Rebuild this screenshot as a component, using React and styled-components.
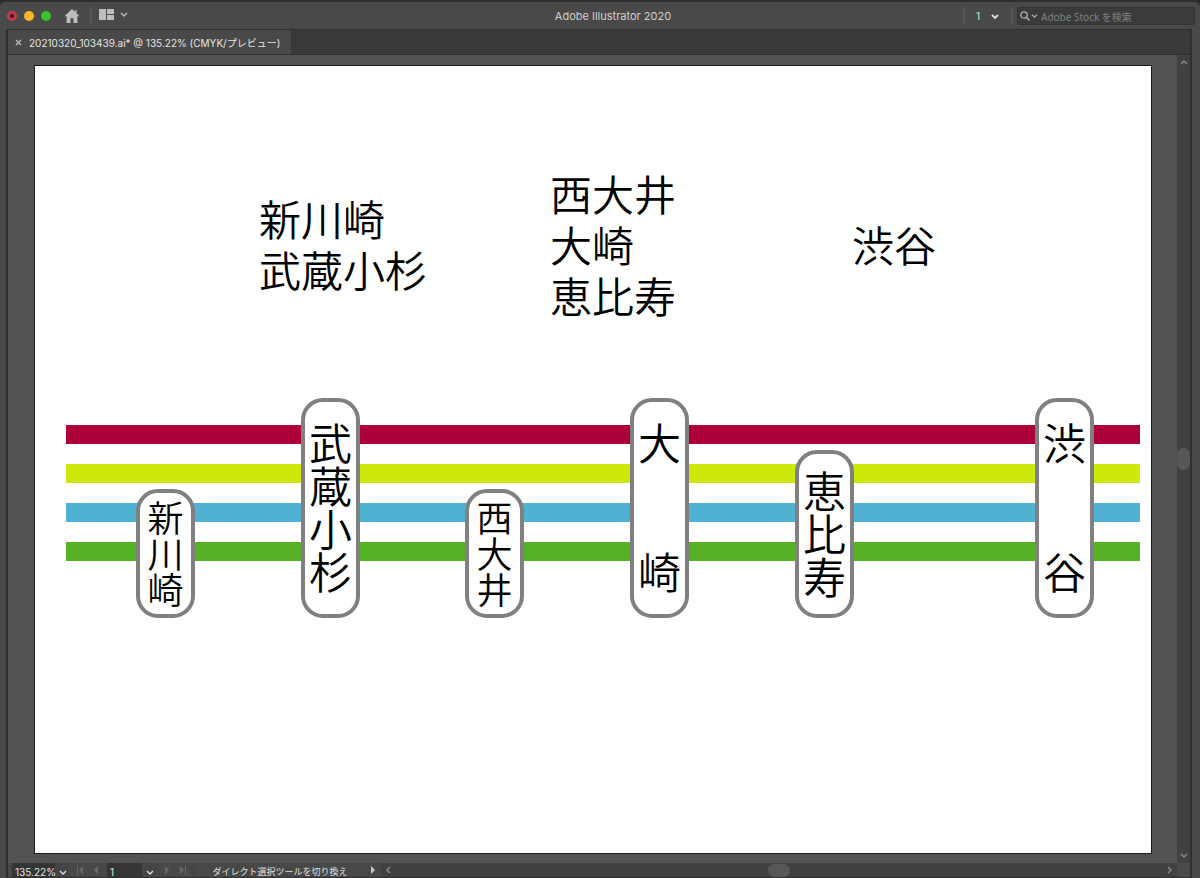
import React from "react";
import styled, { createGlobalStyle } from "styled-components";

const GlobalStyle = createGlobalStyle`
  *, *::before, *::after { box-sizing: border-box; }
  body {
    margin: 0;
    background: #2b2b2b;
    font-family: Inter, "Noto Sans CJK JP", sans-serif;
    font-size: 10px;
    color: #dcdcdc;
  }
  button, input, select { font: inherit; color: inherit; margin: 0; padding: 0; border: 0; background: none; }
`;

const Window = styled.div`
  display: flex;
  flex-direction: column;
  min-height: 100vh;
  background: #494949;
  border-top: 2px solid #303030;
  border-radius: 6px 6px 0 0;
  overflow: hidden;
`;

const TitleBar = styled.header`
  display: grid;
  grid-template-columns: 1fr auto 1fr;
  align-items: center;
  height: 27px;
  padding: 0 5px 0 7px;
`;

const TitleGroup = styled.div`
  display: flex;
  align-items: center;
  justify-content: ${(p) => (p.$end ? "flex-end" : "flex-start")};
`;

const Lights = styled.div`
  display: flex;
  gap: 7px;
`;

const Light = styled.button`
  width: 10px;
  height: 10px;
  border-radius: 50%;
  background: ${(p) => p.$color};
`;

const IconButton = styled.button`
  display: flex;
  align-items: center;
  color: #bdbdbd;
`;

const HomeButton = styled(IconButton)`
  margin: 0 10px 0 13px;
`;

const LayoutButton = styled(IconButton)`
  gap: 6px;
  margin-left: 7px;
  padding-bottom: 3px;
`;

const Divider = styled.span`
  width: 2px;
  height: 18px;
  background: #555;
`;

const Title = styled.h1`
  margin: 0 0 0 24px;
  font-size: 11px;
  font-weight: 400;
  line-height: 16px;
  color: #d0d0d0;
`;

const WorkspaceField = styled.label`
  display: flex;
  align-items: center;
  width: 46px;
  padding: 0 12px 0 11px;
`;

const PlainSelect = styled.select`
  appearance: none;
  flex: 1;
  min-width: 0;
  line-height: 14px;
  outline: none;
`;

const SearchField = styled.label`
  display: flex;
  align-items: center;
  gap: 1px;
  width: 178px;
  height: 18px;
  margin-left: 4px;
  padding-left: 2px;
  background: #3b3b3b;
  border: 1px solid #343434;
  border-radius: 2px;
  color: #b0b0b0;
`;

const SearchInput = styled.input`
  flex: 1;
  min-width: 0;
  padding: 2px 0 0 2px;
  font-family: "Noto Sans", "Noto Sans CJK JP", sans-serif;
  font-size: 10px;
  line-height: 14px;
  outline: none;
  &::placeholder { color: #808080; opacity: 1; }
`;

const Frame = styled.div`
  display: flex;
  flex-direction: column;
  flex: 1;
  margin: 0 8px 0 6px;
  border: solid #303030;
  border-width: 1px 2px;
`;

const TabBar = styled.div`
  display: flex;
  height: 25px;
  background: #393939;
  border-bottom: 1px solid #303030;
`;

const Tab = styled.div`
  display: flex;
  align-items: center;
  gap: 7px;
  padding: 0 11px 0 7px;
  background: #494949;
  color: #e4e4e4;
  white-space: nowrap;
`;

const Workspace = styled.main`
  display: flex;
  flex: 1;
  background: #535353;
`;

const Artboard = styled.section`
  position: relative;
  flex: 1;
  min-height: 620px;
  margin: 10px 25px 9px 26px;
  background: #fff;
  border: 1px solid #1c1c1c;
  color: #000;
  font-family: "Noto Sans CJK JP", sans-serif;
  font-weight: 350;
`;

const TextObject = styled.p`
  position: absolute;
  left: calc(100% * ${(p) => p.$x} / 1116);
  top: ${(p) => p.$y}px;
  margin: 0;
  font-size: 42px;
  line-height: 51px;
  white-space: pre-line;
`;

const Lines = styled.div`
  display: flex;
  flex-direction: column;
  gap: 20px;
  margin: 359px 11px 0 31px;
`;

const Line = styled.div`
  height: 19px;
  background: ${(p) => p.$color};
`;

const Station = styled.div`
  position: absolute;
  left: calc(100% * ${(p) => p.$x} / 1116);
  top: ${(p) => 552 - p.$height}px;
  display: flex;
  align-items: center;
  justify-content: center;
  width: 59px;
  height: ${(p) => p.$height}px;
  background: #fff;
  border: 4px solid #808080;
  border-radius: 22px;
  font-size: ${(p) => p.$size}px;
  line-height: 44px;
  writing-mode: vertical-rl;
  white-space: pre;
`;

const VerticalScroll = styled.div`
  display: flex;
  flex-direction: column;
  align-items: center;
  justify-content: space-between;
  width: 13px;
  padding: 4px 0;
  background: #414141;
  color: #8c8c8c;
`;

const Thumb = styled.div`
  width: ${(p) => (p.$wide ? 22 : 13)}px;
  height: ${(p) => (p.$wide ? 13 : 22)}px;
  border-radius: 7px;
  background: #575757;
`;

const StatusBar = styled.footer`
  display: flex;
  align-items: stretch;
  height: 14px;
  background: #484848;
  color: #e0e0e0;
`;

const StatusField = styled.label`
  display: flex;
  align-items: center;
  width: ${(p) => p.$width}px;
  margin-left: ${(p) => p.$gap}px;
  padding: 3px 3px 0;
  background: linear-gradient(to left, #454545 15px, #353535 15px);
`;

const StatusNav = styled.div`
  display: flex;
  align-items: center;
  justify-content: center;
  gap: 8px;
  width: 36px;
`;

const NavButton = styled(IconButton)`
  color: ${(p) => (p.$on ? "#c8c8c8" : "#686868")};
`;

const StatusText = styled.span`
  width: 173px;
  padding-top: 2px;
  border-left: 1px solid #404040;
  font-size: 9px;
  line-height: 14px;
  text-align: center;
  white-space: nowrap;
  overflow: hidden;
`;

const StatusMenu = styled(NavButton)`
  justify-content: center;
  width: 15px;
`;

const HorizontalScroll = styled.div`
  display: flex;
  align-items: center;
  justify-content: space-between;
  flex: 1;
  padding: 0 4px;
  background: #414141;
  color: #8c8c8c;
`;

const Corner = styled.div`
  width: 13px;
  background: #4a4a4a;
`;

const chevrons = {
  down: "M1 3l3 3 3-3",
  up: "M1 5l3-3 3 3",
  left: "M5 1L2 4l3 3",
  right: "M3 1l3 3-3 3",
};

const Chevron = ({ dir = "down", size = 8, weight = 1.4 }) => (
  <svg width={size} height={size} viewBox="0 0 8 8" fill="none" stroke="currentColor" strokeWidth={weight} aria-hidden="true">
    <path d={chevrons[dir]} />
  </svg>
);

const CloseGlyph = () => (
  <svg width="7" height="7" viewBox="0 0 7 7" stroke="currentColor" strokeWidth="1.4" aria-hidden="true">
    <path d="M1 1l5 5M6 1L1 6" />
  </svg>
);

const HomeIcon = () => (
  <svg width="16" height="14" viewBox="0 0 16 14" fill="currentColor" aria-hidden="true">
    <path d="M8 0L0.5 7.2H2.6V14H6.5V9.2H9.5V14H13.4V7.2H15.5L12.6 4.4V1.2H10.9V2.8Z" />
  </svg>
);

const LayoutIcon = () => (
  <svg width="15" height="11" viewBox="0 0 15 11" fill="currentColor" aria-hidden="true">
    <path d="M0 0h7v11H0zM8 0h7v5H8zM8 6h7v5H8z" />
  </svg>
);

const SearchIcon = () => (
  <svg width="10" height="10" viewBox="0 0 10 10" fill="none" stroke="currentColor" strokeWidth="1.3" aria-hidden="true">
    <circle cx="4" cy="4" r="3.2" />
    <path d="M6.3 6.3L9.5 9.5" />
  </svg>
);

const StepIcon = ({ back, end }) => (
  <svg width="7" height="8" viewBox="0 0 7 8" fill="currentColor" aria-hidden="true">
    <path d={back ? "M6 0v8L2 4z" : "M1 0v8l4-4z"} />
    {end && <path d={back ? "M0 0h1v8H0z" : "M6 0h1v8H6z"} />}
  </svg>
);

const lines = ["#ac003a", "#cde90c", "#4fb2d2", "#57b125"];

const memos = [
  { x: 224, y: 126, text: "新川崎\n武蔵小杉" },
  { x: 515, y: 101, text: "西大井\n大崎\n恵比寿" },
  { x: 817, y: 152, text: "渋谷" },
];

const stations = [
  { name: "新川崎", x: 101, height: 129, size: 36 },
  { name: "武蔵小杉", x: 266, height: 220, size: 43 },
  { name: "西大井", x: 430, height: 129, size: 36 },
  { name: "大　　崎", x: 595, height: 220, size: 43 },
  { name: "恵比寿", x: 760, height: 168, size: 43 },
  { name: "渋　　谷", x: 1000, height: 220, size: 43 },
];

export default function App() {
  return (
    <Window>
      <GlobalStyle />
      <TitleBar>
        <TitleGroup>
          <Lights>
            <Light $color="radial-gradient(circle, #351018 1px, #c8384f 3px)" aria-label="閉じる" />
            <Light $color="#ffb429" aria-label="しまう" />
            <Light $color="#38c22e" aria-label="拡大" />
          </Lights>
          <HomeButton aria-label="ホーム"><HomeIcon /></HomeButton>
          <Divider />
          <LayoutButton aria-label="ドキュメントレイアウト">
            <LayoutIcon />
            <Chevron />
          </LayoutButton>
        </TitleGroup>
        <Title>Adobe Illustrator 2020</Title>
        <TitleGroup $end>
          <Divider />
          <WorkspaceField>
            <PlainSelect aria-label="ワークスペース"><option>1</option></PlainSelect>
            <Chevron weight={1.8} />
          </WorkspaceField>
          <Divider />
          <SearchField>
            <SearchIcon />
            <Chevron size={7} />
            <SearchInput type="text" aria-label="Adobe Stock" placeholder="Adobe Stock を検索" />
          </SearchField>
        </TitleGroup>
      </TitleBar>
      <Frame>
        <TabBar>
          <Tab>
            <IconButton aria-label="タブを閉じる"><CloseGlyph /></IconButton>
            <span>20210320_103439.ai* @ 135.22% (CMYK/プレビュー)</span>
          </Tab>
        </TabBar>
        <Workspace>
          <Artboard>
            <Lines>
              {lines.map((color) => <Line key={color} $color={color} />)}
            </Lines>
            {memos.map((m) => (
              <TextObject key={m.text} $x={m.x} $y={m.y}>{m.text}</TextObject>
            ))}
            {stations.map((s) => (
              <Station key={s.name} $x={s.x} $height={s.height} $size={s.size}>{s.name}</Station>
            ))}
          </Artboard>
          <VerticalScroll>
            <Chevron dir="up" />
            <Thumb />
            <Chevron />
          </VerticalScroll>
        </Workspace>
        <StatusBar>
          <StatusField $width={58} $gap={4}>
            <PlainSelect aria-label="ズーム"><option>135.22%</option></PlainSelect>
            <Chevron />
          </StatusField>
          <StatusNav>
            <NavButton aria-label="最初"><StepIcon back end /></NavButton>
            <NavButton aria-label="前へ"><StepIcon back /></NavButton>
          </StatusNav>
          <StatusField $width={50} $gap={1}>
            <PlainSelect aria-label="アートボード"><option>1</option></PlainSelect>
            <Chevron />
          </StatusField>
          <StatusNav>
            <NavButton aria-label="次へ"><StepIcon /></NavButton>
            <NavButton aria-label="最後"><StepIcon end /></NavButton>
          </StatusNav>
          <StatusText>ダイレクト選択ツールを切り換え</StatusText>
          <StatusMenu $on aria-label="表示メニュー"><StepIcon /></StatusMenu>
          <HorizontalScroll>
            <Chevron dir="left" />
            <Thumb $wide />
            <Chevron dir="right" />
          </HorizontalScroll>
          <Corner />
        </StatusBar>
      </Frame>
    </Window>
  );
}
